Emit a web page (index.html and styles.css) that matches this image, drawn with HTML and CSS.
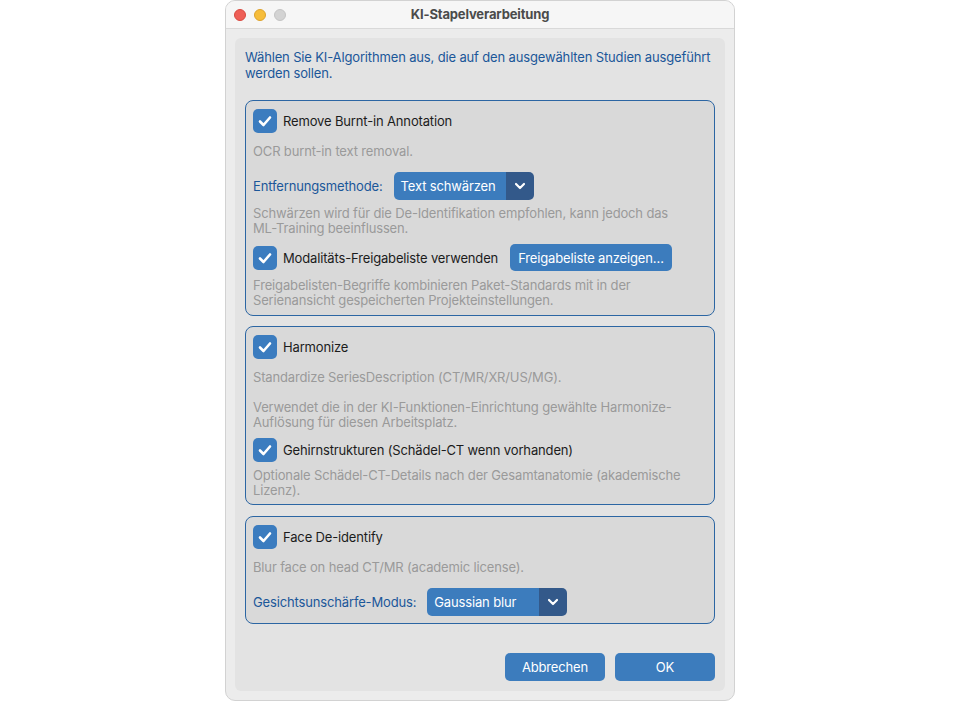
FILE: index.html
```html
<!DOCTYPE html>
<html lang="de">
<head>
<meta charset="utf-8">
<title>KI-Stapelverarbeitung</title>
<link rel="stylesheet" href="styles.css">
</head>
<body>
<div class="window">
  <div class="titlebar">
    <div class="lights">
      <span class="light red"></span>
      <span class="light yellow"></span>
      <span class="light gray"></span>
    </div>
    <div class="title">KI-Stapelverarbeitung</div>
  </div>
  <div class="body">
    <div class="panel">
      <p class="intro">Wählen Sie KI-Algorithmen aus, die auf den ausgewählten Studien ausgeführt werden sollen.</p>

      <div class="group g1">
        <label class="check-row">
          <span class="cb"><svg viewBox="0 0 24 24" width="24" height="24"><path d="M7 12.5 L10.5 16 L17 8.5" fill="none" stroke="#fff" stroke-width="2.6" stroke-linecap="round" stroke-linejoin="round"/></svg></span>
          <span class="cb-label">Remove Burnt-in Annotation</span>
        </label>
        <p class="desc after-check">OCR burnt-in text removal.</p>
        <div class="field-row">
          <span class="field-label">Entfernungsmethode:</span>
          <div class="select">
            <span class="select-value">Text schwärzen</span>
            <span class="select-arrow"><svg viewBox="0 0 12 8" width="12" height="8"><path d="M2 2 L6 6 L10 2" fill="none" stroke="#fff" stroke-width="2.2" stroke-linecap="round" stroke-linejoin="round"/></svg></span>
          </div>
        </div>
        <p class="desc after-field">Schwärzen wird für die De-Identifikation empfohlen, kann jedoch das <span class="nowrap">ML-Training</span> beeinflussen.</p>
        <div class="check-row with-btn">
          <span class="cb"><svg viewBox="0 0 24 24" width="24" height="24"><path d="M7 12.5 L10.5 16 L17 8.5" fill="none" stroke="#fff" stroke-width="2.6" stroke-linecap="round" stroke-linejoin="round"/></svg></span>
          <span class="cb-label">Modalitäts-Freigabeliste verwenden</span>
          <button class="btn small">Freigabeliste anzeigen…</button>
        </div>
        <p class="desc after-btn">Freigabelisten-Begriffe kombinieren Paket-Standards mit in der Serienansicht gespeicherten Projekteinstellungen.</p>
      </div>

      <div class="group g2">
        <label class="check-row">
          <span class="cb"><svg viewBox="0 0 24 24" width="24" height="24"><path d="M7 12.5 L10.5 16 L17 8.5" fill="none" stroke="#fff" stroke-width="2.6" stroke-linecap="round" stroke-linejoin="round"/></svg></span>
          <span class="cb-label">Harmonize</span>
        </label>
        <p class="desc after-check multi">Standardize SeriesDescription (CT/MR/XR/US/MG).

Verwendet die in der KI-Funktionen-Einrichtung gewählte Harmonize-Auflösung für diesen Arbeitsplatz.</p>
        <label class="check-row sub">
          <span class="cb"><svg viewBox="0 0 24 24" width="24" height="24"><path d="M7 12.5 L10.5 16 L17 8.5" fill="none" stroke="#fff" stroke-width="2.6" stroke-linecap="round" stroke-linejoin="round"/></svg></span>
          <span class="cb-label">Gehirnstrukturen (Schädel-CT wenn vorhanden)</span>
        </label>
        <p class="desc after-sub">Optionale Schädel-CT-Details nach der Gesamtanatomie (akademische Lizenz).</p>
      </div>

      <div class="group g3">
        <label class="check-row">
          <span class="cb"><svg viewBox="0 0 24 24" width="24" height="24"><path d="M7 12.5 L10.5 16 L17 8.5" fill="none" stroke="#fff" stroke-width="2.6" stroke-linecap="round" stroke-linejoin="round"/></svg></span>
          <span class="cb-label">Face De-identify</span>
        </label>
        <p class="desc after-check">Blur face on head CT/MR (academic license).</p>
        <div class="field-row">
          <span class="field-label">Gesichtsunschärfe-Modus:</span>
          <div class="select">
            <span class="select-value">Gaussian blur</span>
            <span class="select-arrow"><svg viewBox="0 0 12 8" width="12" height="8"><path d="M2 2 L6 6 L10 2" fill="none" stroke="#fff" stroke-width="2.2" stroke-linecap="round" stroke-linejoin="round"/></svg></span>
          </div>
        </div>
      </div>

      <div class="actions">
        <button class="btn action">Abbrechen</button>
        <button class="btn action">OK</button>
      </div>
    </div>
  </div>
</div>
</body>
</html>
```

FILE: styles.css
```css
* { box-sizing: border-box; }

html, body {
  margin: 0;
  padding: 0;
  background: #ffffff;
  font-family: "Inter", "Liberation Sans", "Noto Sans", sans-serif;
  font-size: 13px;
  letter-spacing: -0.15px;
}

.window {
  width: 510px;
  height: 701px;
  margin: 0 auto;
  background: #ececec;
  border: 1px solid #d2d2d2;
  border-radius: 10px;
  overflow: hidden;
  display: flex;
  flex-direction: column;
}

.titlebar {
  height: 28px;
  flex: none;
  background: #f6f6f6;
  border-bottom: 1px solid #d9d9d9;
  display: flex;
  align-items: center;
  position: relative;
}

.lights {
  display: flex;
  gap: 8px;
  padding-left: 8px;
}

.light {
  width: 12px;
  height: 12px;
  border-radius: 50%;
  display: block;
}
.light.red { background: #ee5f57; border: 0.5px solid #d8493f; }
.light.yellow { background: #f6bd3b; border: 0.5px solid #dca22c; }
.light.gray { background: #d3d3d3; border: 0.5px solid #c4c4c4; }

.title {
  position: absolute;
  left: 0;
  right: 0;
  top: 0;
  line-height: 27px;
  text-align: center;
  font-weight: 700;
  color: #4b4b4b;
  font-size: 13px;
}

.body {
  flex: 1;
  padding: 9px;
  display: flex;
}

.panel {
  flex: 1;
  background: #e3e3e3;
  border-radius: 6px;
  padding: 11px 10px 10px 10px;
  display: flex;
  flex-direction: column;
}

.intro {
  margin: 0 0 19px 0;
  color: #1b5799;
  line-height: 16px;
}

.group {
  background: #d9d9d9;
  border: 1px solid #2c66a3;
  border-radius: 8px;
  padding: 8px 8px 7px 7px;
  margin-bottom: 10px;
}
.g2 { padding-bottom: 6px; margin-bottom: 11px; }

.check-row {
  display: flex;
  align-items: center;
  height: 24px;
}
.check-row.with-btn {
  height: 27px;
  margin-top: 8px;
}
.check-row.sub { margin-top: 8px; }

.cb {
  width: 24px;
  height: 24px;
  border-radius: 5px;
  background: #3b7cbf;
  display: flex;
  flex: none;
}

.cb-label {
  margin-left: 6px;
  color: #1c1c1c;
}

.desc {
  margin: 0;
  color: #9a9a9a;
  line-height: 15px;
  white-space: pre-line;
}
.desc.after-check { margin-top: 11px; }
.desc.after-field { margin-top: 6px; }
.desc.after-btn { margin-top: 7px; }
.desc.after-sub { margin-top: 6px; }
.desc.multi { margin-top: 11px; }

.nowrap { white-space: nowrap; }

.field-row {
  display: flex;
  align-items: center;
  margin-top: 13px;
  height: 28px;
}

.field-label {
  color: #1b5799;
  margin-right: 11px;
}

.select {
  display: flex;
  width: 140px;
  height: 28px;
  border-radius: 5px;
  overflow: hidden;
}
.select-value {
  flex: 1;
  background: #3c7cbd;
  color: #ffffff;
  padding-left: 7px;
  line-height: 28px;
}
.select-arrow {
  width: 28px;
  background: #33598a;
  display: flex;
  align-items: center;
  justify-content: center;
}

.btn {
  font-family: inherit;
  font-size: 13px;
  letter-spacing: inherit;
  border: none;
  color: #ffffff;
  background: #3c7cbd;
  border-radius: 5px;
  cursor: default;
}
.btn.small {
  height: 27px;
  margin-left: 12px;
  padding: 0 8px;
}

.actions {
  margin-top: auto;
  display: flex;
  justify-content: flex-end;
  gap: 10px;
}
.btn.action {
  width: 100px;
  height: 28px;
}
```
